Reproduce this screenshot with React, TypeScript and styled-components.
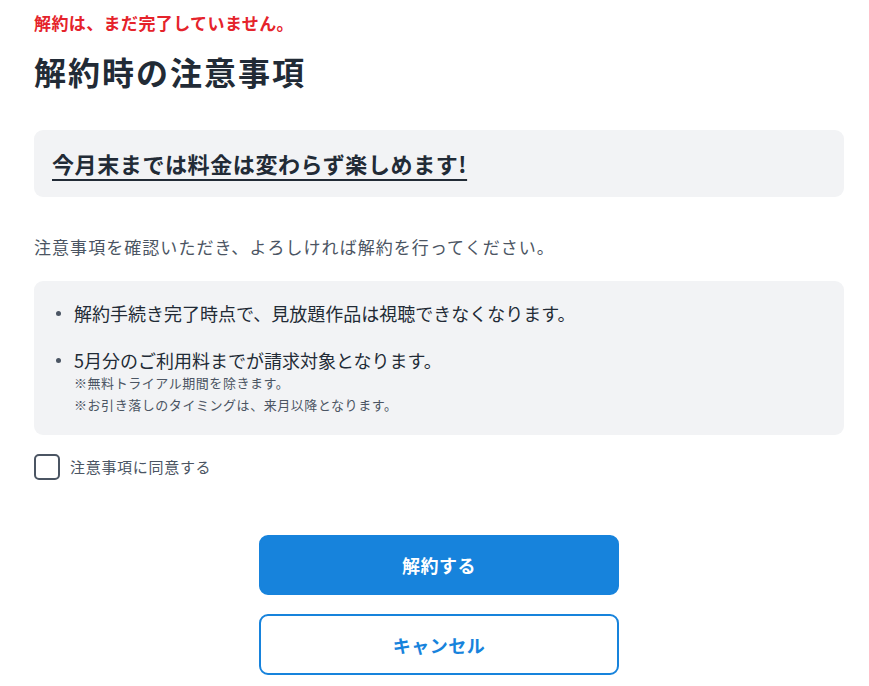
import React from "react";
import styled, { createGlobalStyle } from "styled-components";

const GlobalStyle = createGlobalStyle`
  html, body {
    margin: 0;
    padding: 0;
    background: #ffffff;
  }
  body {
    font-family: "Noto Sans CJK JP", "Noto Sans", sans-serif;
    color: #222b36;
  }
`;

const Page = styled.main`
  width: 810px;
  padding: 11px 0 10px 34px;
  display: flex;
  flex-direction: column;
`;

const Alert = styled.p`
  margin: 0;
  font-size: 17px;
  line-height: 24px;
  font-weight: 700;
  letter-spacing: 0.4px;
  color: #e5232b;
`;

const Title = styled.h1`
  margin: 14px 0 0;
  font-size: 32px;
  line-height: 44px;
  font-weight: 700;
  letter-spacing: 2px;
  color: #222b36;
`;

const Panel = styled.section<{ $mt: number }>`
  margin-top: ${(p) => p.$mt}px;
  background: #f2f3f5;
  border-radius: 9px;
`;

const Highlight = styled(Panel)`
  padding: 18px 18px;
`;

const HighlightText = styled.span`
  font-size: 22px;
  line-height: 31px;
  font-weight: 700;
  letter-spacing: 0.6px;
  color: #222b36;
  text-decoration: underline;
  text-decoration-thickness: 2px;
  text-underline-offset: 6px;
`;

const Intro = styled.p`
  margin: 36px 0 0;
  font-size: 17px;
  line-height: 28px;
  letter-spacing: 1.05px;
  color: #4b5563;
`;

const NoticeList = styled.ul`
  list-style: none;
  margin: 0;
  padding: 20px 22px 19px;
  display: flex;
  flex-direction: column;
  gap: 23px;
`;

const NoticeItem = styled.li`
  display: flex;
  align-items: flex-start;
`;

const Dot = styled.span`
  flex: none;
  width: 5px;
  height: 5px;
  margin: 10px 13px 0 0;
  border-radius: 50%;
  background: #4b5563;
`;

const NoticeBody = styled.div`
  display: flex;
  flex-direction: column;
`;

const NoticeText = styled.span`
  font-size: 18px;
  line-height: 24px;
  letter-spacing: 0;
  color: #222b36;
`;

const Note = styled.span`
  font-size: 13px;
  line-height: 22px;
  letter-spacing: 0.55px;
  color: #4b5563;
`;

const AgreeRow = styled.label`
  margin-top: 19px;
  display: flex;
  align-items: center;
  gap: 10px;
  cursor: pointer;
`;

const Box = styled.span`
  width: 26px;
  height: 26px;
  box-sizing: border-box;
  border: 2px solid #4b5563;
  border-radius: 5px;
  background: #fff;
`;

const AgreeText = styled.span`
  font-size: 15px;
  line-height: 24px;
  letter-spacing: 0.7px;
  color: #4b5563;
`;

const Actions = styled.div`
  margin-top: 55px;
  display: flex;
  flex-direction: column;
  align-items: center;
  gap: 19px;
`;

const Button = styled.button<{ $outline?: boolean }>`
  width: 360px;
  height: ${(p) => (p.$outline ? 61 : 60)}px;
  box-sizing: border-box;
  border-radius: 9px;
  border: 2px solid #1783dc;
  background: ${(p) => (p.$outline ? "#ffffff" : "#1783dc")};
  color: ${(p) => (p.$outline ? "#1783dc" : "#ffffff")};
  font-family: inherit;
  font-size: 18px;
  font-weight: 700;
  letter-spacing: 0.5px;
  cursor: pointer;
`;

export default function App() {
  return (
    <>
      <GlobalStyle />
      <Page>
        <Alert>解約は、まだ完了していません。</Alert>
        <Title>解約時の注意事項</Title>

        <Highlight $mt={37}>
          <HighlightText>今月末までは料金は変わらず楽しめます!</HighlightText>
        </Highlight>

        <Intro>注意事項を確認いただき、よろしければ解約を行ってください。</Intro>

        <Panel $mt={20}>
          <NoticeList>
            <NoticeItem>
              <Dot />
              <NoticeBody>
                <NoticeText>解約手続き完了時点で、見放題作品は視聴できなくなります。</NoticeText>
              </NoticeBody>
            </NoticeItem>
            <NoticeItem>
              <Dot />
              <NoticeBody>
                <NoticeText>5月分のご利用料までが請求対象となります。</NoticeText>
                <Note>※無料トライアル期間を除きます。</Note>
                <Note>※お引き落しのタイミングは、来月以降となります。</Note>
              </NoticeBody>
            </NoticeItem>
          </NoticeList>
        </Panel>

        <AgreeRow>
          <Box />
          <AgreeText>注意事項に同意する</AgreeText>
        </AgreeRow>

        <Actions>
          <Button>解約する</Button>
          <Button $outline>キャンセル</Button>
        </Actions>
      </Page>
    </>
  );
}
